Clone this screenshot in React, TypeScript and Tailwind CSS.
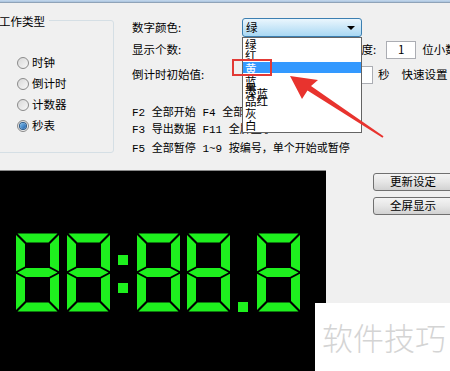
import React from 'react';

const SEGMENTS = [
  '1.5,0 41.5,0 32.5,9 10.5,9',
  '0,1.5 9,10.5 9,33 0,37.8',
  '43,1.5 43,37.8 34,33 34,10.5',
  '1.5,39 10,34.5 33,34.5 41.5,39 33,43.5 10,43.5',
  '0,40.2 9,45 9,67.5 0,76.5',
  '43,40.2 43,76.5 34,67.5 34,45',
  '1.5,78 10.5,69 32.5,69 41.5,78',
];

const GREEN = '#1ef01e';

function Digit() {
  return (
    <svg width="43" height="79" viewBox="0 0 43 78" className="shrink-0">
      {SEGMENTS.map((p) => (
        <polygon key={p} points={p} fill={GREEN} />
      ))}
    </svg>
  );
}

function Colon() {
  return (
    <div className="flex flex-col w-[10px] shrink-0">
      <div className="mt-[22px] h-[10px] w-[10px] bg-[#1ef01e]" />
      <div className="mt-[18px] h-[10px] w-[10px] bg-[#1ef01e]" />
    </div>
  );
}

function Dot() {
  return (
    <div className="w-[10px] shrink-0">
      <div className="mt-[69px] h-[10px] w-[10px] bg-[#1ef01e]" />
    </div>
  );
}

const radios = [
  { label: '时钟', checked: false },
  { label: '倒计时', checked: false },
  { label: '计数器', checked: false },
  { label: '秒表', checked: true },
];

function Radio({ checked }: { checked: boolean }) {
  return (
    <span className="relative flex h-[12px] w-[12px] items-center justify-center rounded-full border border-[#8a8a8a] bg-gradient-to-br from-[#d8d8d8] to-[#f8f8f8]">
      {checked && (
        <span className="h-[6px] w-[6px] rounded-full bg-gradient-to-br from-[#7fc0f0] to-[#1d5fa8] ring-1 ring-[#2b5a8a]" />
      )}
    </span>
  );
}

function TextBox({ value, className = '' }: { value: string; className?: string }) {
  return (
    <div
      className={`flex h-[18px] shrink-0 items-center justify-center border border-[#abadb3] bg-white text-[11.5px] ${className}`}
    >
      {value}
    </div>
  );
}

const listItems = [
  { t: '绿', top: 0, left: 2 },
  { t: '红', top: 11, left: 2 },
  { t: '黄', top: 24, left: 2, sel: true },
  { t: '蓝', top: 37, left: 2 },
  { t: '黑', top: 44, left: 2 },
  { t: '深蓝', top: 49, left: 2 },
  { t: '品红', top: 57, left: 2 },
  { t: '灰', top: 69, left: 2 },
  { t: '白', top: 81, left: 2 },
];

const monoLine =
  "whitespace-nowrap leading-[16px] text-[11px] [font-family:'Liberation_Mono','Noto_Sans_CJK_SC',monospace]";

export default function App() {
  return (
    <div className="relative h-[371px] w-[450px] overflow-hidden bg-[#f0f0f0] text-[11.5px] leading-none text-black [font-family:'Noto_Sans_CJK_SC','Noto_Sans',sans-serif]">
      <div className="h-[3px] border-b border-[#8fa3b8] bg-gradient-to-b from-[#c5d9ee] to-[#a9c2dd]" />

      <div className="flex h-[167px]">
        <div className="relative ml-[-10px] mt-[17px] h-[133px] w-[124px] shrink-0 rounded-[3px] border border-[#d5dfe5]">
          <span className="absolute left-[8px] top-[-8px] bg-[#f0f0f0] pr-[4px] leading-[16px]">工作类型</span>
          <div className="flex flex-col pl-[26px] pt-[31px]">
            {radios.map((r) => (
              <div key={r.label} className="flex h-[21px] items-center gap-[3px]">
                <Radio checked={r.checked} />
                <span>{r.label}</span>
              </div>
            ))}
          </div>
        </div>

        <div className="ml-[18px] flex min-w-0 flex-col">
          <div className="mt-[15px] flex h-[19px] items-center [&>*]:shrink-0">
            <span className="w-[110px] whitespace-nowrap">数字颜色:</span>
            <div className="flex h-[19px] w-[120px] items-center justify-between rounded-[3px] border border-[#3c7fb1] bg-gradient-to-b from-[#eaf6fd] to-[#a9d8f3] pl-[3px] pr-[6px]">
              <span>绿</span>
              <span className="h-0 w-0 border-x-[4px] border-t-[4px] border-x-transparent border-t-black" />
            </div>
          </div>

          <div className="mt-[4px] flex h-[18px] items-center [&>*]:shrink-0">
            <span className="w-[110px] whitespace-nowrap">显示个数:</span>
            <TextBox value="4" className="w-[50px]" />
            <span className="ml-[58px] whitespace-nowrap">精度:</span>
            <TextBox value="1" className="ml-[10px] w-[30px]" />
            <span className="ml-[6px] whitespace-nowrap">位小数</span>
          </div>

          <div className="mt-[7px] flex h-[18px] items-center [&>*]:shrink-0">
            <span className="w-[101px] whitespace-nowrap">倒计时初始值:</span>
            <TextBox value="5" className="ml-[110px] w-[30px]" />
            <span className="ml-[5px]">秒</span>
            <span className="ml-[12px] whitespace-nowrap">快速设置</span>
          </div>

          <div className={`mt-[21px] ${monoLine}`}>F2 全部开始 F4 全部停止</div>
          <div className={`mt-[1px] ${monoLine}`}>F3 导出数据 F11 全屏显示</div>
          <div className={`mt-[3px] ${monoLine}`}>F5 全部暂停 1~9 按编号，单个开始或暂停</div>
        </div>
      </div>

      <div className="flex">
        <div className="h-[201px] w-[326px] shrink-0 border-t border-[#8a8a8a] bg-black">
          <div className="flex pl-[16px] pt-[62px]">
            <Digit />
            <div className="ml-[8px]"><Digit /></div>
            <div className="ml-[8px]"><Colon /></div>
            <div className="ml-[9px]"><Digit /></div>
            <div className="ml-[7px]"><Digit /></div>
            <div className="ml-[8px]"><Dot /></div>
            <div className="ml-[9px]"><Digit /></div>
          </div>
        </div>
        <div className="ml-[47px] mt-[3px] flex shrink-0 flex-col gap-[6px]">
          {['更新设定', '全屏显示'].map((b) => (
            <button
              key={b}
              type="button"
              className="flex h-[18px] w-[80px] items-center justify-center rounded-[3px] border border-[#707070] bg-gradient-to-b from-[#f4f4f4] via-[#e6e6e6] to-[#d2d2d2]"
            >
              {b}
            </button>
          ))}
        </div>
      </div>

      {/* drop-down list */}
      <div className="absolute left-[242px] top-[37px] h-[96px] w-[120px] border border-[#646464] bg-white">
        <div className="absolute left-0 top-[24px] h-[11px] w-full bg-[#3399ff]" />
        {listItems.map((it) => (
          <span
            key={it.t + it.top}
            className={`absolute leading-[12px] ${it.sel ? 'text-white' : 'text-black'}`}
            style={{ top: it.top, left: it.left }}
          >
            {it.t}
          </span>
        ))}
      </div>

      <div className="absolute left-[232px] top-[59px] h-[17px] w-[40px] border-2 border-[#e23a36]" />

      <svg className="pointer-events-none absolute left-0 top-0" width="450" height="371">
        <polygon
          points="290,76 318,80 311,86 383.5,136.2 382.5,137.8 307.5,90.5 302,99"
          fill="#e8332e"
        />
      </svg>

      <div className="absolute left-[315px] top-[303px] flex h-[68px] w-[135px] items-start bg-white pl-[7px] pt-[17px]">
        <span className="text-[31px] font-light leading-[34px] text-[#d4d4d4]">软件技巧</span>
      </div>
    </div>
  );
}
